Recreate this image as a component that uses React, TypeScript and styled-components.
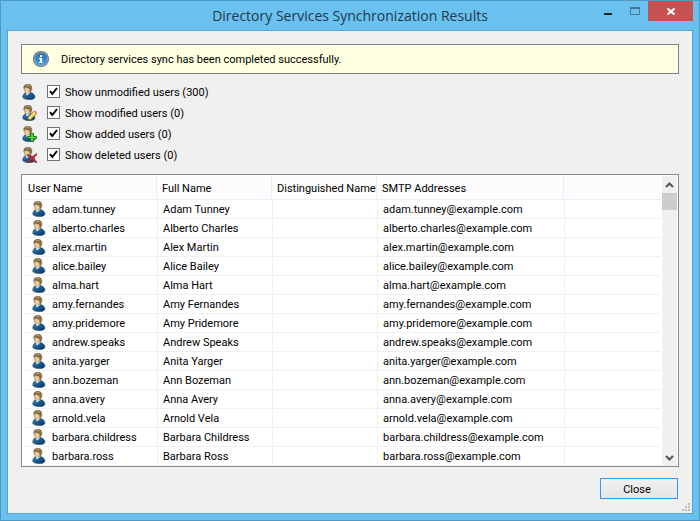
import React, { useState } from "react";
import styled, { createGlobalStyle } from "styled-components";

const GlobalStyle = createGlobalStyle`
  *, *::before, *::after { box-sizing: border-box; }
  body { margin: 0; background: #6ac1ef; }
  button, input { font: inherit; color: inherit; }
`;

const uiFont = `Roboto, "Open Sans", sans-serif`;

const Window = styled.div`
  display: flex;
  flex-direction: column;
  min-height: 100vh;
  padding: 0 6px 6px;
  border: 1px solid #4f9ac4;
  background: #6ac1ef;
  color: #000;
  font: 11px/14px ${uiFont};
`;

const TitleBar = styled.header`
  display: grid;
  grid-template-columns: 1fr auto 1fr;
  align-items: start;
  height: 29px;
`;

const Title = styled.h1`
  grid-column: 2;
  margin: 0;
  font: 400 14px/29px "Open Sans", sans-serif;
  color: #22384a;
  white-space: nowrap;
`;

const WindowButtons = styled.div`
  display: flex;
  justify-content: flex-end;
`;

const WindowButton = styled.button<{ $width: number; $danger?: boolean }>`
  display: flex;
  width: ${(p) => p.$width}px;
  height: 20px;
  padding: 0;
  border: 0;
  background: ${(p) => (p.$danger ? "#c75050" : "transparent")};
`;

const Client = styled.main`
  display: flex;
  flex: 1;
  flex-direction: column;
  padding: 13px 13px 14px;
  border: 1px solid #57a4cf;
  background: #f0f0f0;
`;

const Notice = styled.div`
  display: flex;
  align-items: center;
  gap: 12px;
  height: 30px;
  padding: 0 11px;
  border: 1px solid #828282;
  background: #ffffe1;
`;

const Label = styled.span`
  padding-top: 2px;
`;

const Options = styled.div`
  display: flex;
  flex-direction: column;
  padding: 7px 0 9px;
`;

const Option = styled.label`
  display: flex;
  align-items: center;
  height: 21px;
`;

const CheckWrap = styled.span`
  display: grid;
  margin: 0 5px 0 10px;
  svg { grid-area: 1 / 1; pointer-events: none; }
  input:not(:checked) + svg { visibility: hidden; }
`;

const CheckBox = styled.input`
  grid-area: 1 / 1;
  appearance: none;
  width: 13px;
  height: 13px;
  margin: 0;
  border: 1px solid #707070;
  background: #fff;
`;

const ListFrame = styled.div`
  display: flex;
  flex: 1;
  padding: 1px 1px 0;
  border: 1px solid #898989;
  background: #fff;
`;

const TableArea = styled.div`
  flex: 1;
  min-width: 0;
  overflow: hidden;
`;

const Table = styled.table`
  width: 100%;
  table-layout: fixed;
  border-collapse: separate;
  border-spacing: 0;
`;

const Column = styled.col<{ $width?: number }>`
  width: ${(p) => (p.$width ? `${p.$width}px` : "auto")};
`;

const HeadCell = styled.th`
  height: 24px;
  padding: 2px 0 0 5px;
  border-right: 1px solid #e5effa;
  border-bottom: 1px solid #e5effa;
  background: #fcfcfc;
  font-weight: 400;
  text-align: left;
  white-space: nowrap;
  &:last-child { border-right: 0; }
`;

const Cell = styled.td`
  height: 19px;
  padding: 2px 0 0 5px;
  border-left: 1px solid #f0f0f0;
  border-bottom: 1px solid #f0f0f0;
  white-space: nowrap;
  &:first-child { padding: 0 0 0 8px; border-left: 0; }
`;

const UserLabel = styled.span`
  display: flex;
  align-items: center;
  gap: 5px;
  height: 18px;
`;

const ScrollBar = styled.div`
  display: flex;
  flex-direction: column;
  width: 15px;
  margin-left: 1px;
  background: #f0f0f0;
`;

const ScrollButton = styled.button`
  display: flex;
  align-items: center;
  justify-content: center;
  height: 17px;
  padding: 0;
  border: 0;
  background: transparent;
`;

const ScrollTrack = styled.div`
  flex: 1;
`;

const ScrollThumb = styled.div`
  height: 17px;
  background: #cdcdcd;
`;

const Footer = styled.footer`
  display: flex;
  justify-content: flex-end;
  padding: 11px 1px 0 0;
`;

const CloseButton = styled.button`
  width: 78px;
  height: 21px;
  padding: 2px 4px 0 0;
  border: 1px solid #3399ff;
  background: linear-gradient(#f0f0f0, #e5e5e5);
`;

const Grip = styled.svg`
  position: absolute;
  right: 10px;
  bottom: 10px;
`;

const Shell = styled.div`
  position: relative;
`;

type Badge = "edit" | "add" | "remove";

function UserIcon({ badge }: { badge?: Badge }) {
  return (
    <svg width="16" height="16" viewBox="0 0 16 16" aria-hidden="true">
      <defs>
        <linearGradient id="coat" x1="0" y1="0" x2="1" y2="1">
          <stop offset="0" stopColor="#4388b2" />
          <stop offset="0.5" stopColor="#17568b" />
          <stop offset="1" stopColor="#0a3566" />
        </linearGradient>
        <linearGradient id="skin" x1="0" y1="0" x2="1" y2="0">
          <stop offset="0" stopColor="#c49c6c" />
          <stop offset="0.45" stopColor="#f5dcae" />
          <stop offset="1" stopColor="#b98b5c" />
        </linearGradient>
      </defs>
      <path d="M1.8 13.6C1.8 11.2 2.6 9.4 4.8 8.6L9.6 8.6C12.4 9.3 13.8 10.8 13.9 13.4C12.6 16.3 4 16.3 1.8 13.6Z" fill="url(#coat)" stroke="#173e61" strokeWidth="0.6" />
      <path d="M4.6 8.4L5.8 11.4L8.6 9.4L8.4 7.8Z" fill="#e7edf1" />
      <path d="M3.2 3.1C3.1 6.6 3.8 9.4 6.4 9.3C9 9.1 10 6.8 9.9 3.6Z" fill="url(#skin)" stroke="#9b7b55" strokeWidth="0.4" />
      <path d="M2.8 4.4C2.4 1.4 4.2 0.3 6.7 0.3C10 0.2 11.4 2.2 10.8 5.6L9.6 8L8.4 4.2C7 4.2 5.6 3.6 4.4 2.9Z" fill="#897044" stroke="#665332" strokeWidth="0.4" />
      <path d="M4.8 1.5Q7 .7 8.8 2" fill="none" stroke="#c7af7e" strokeWidth="0.7" />
      {badge === "edit" && (
        <g>
          <path d="M6.4 15.4L7.2 12.2L13 6.2L15.6 8.6L9.8 14.5Z" fill="#f8d65d" stroke="#896524" strokeWidth="0.8" />
          <path d="M13 6.2L14.2 5.4L16 7.3L15.4 8.6Z" fill="#e28176" />
          <path d="M8.1 12.8L13.8 7.1" stroke="#fff3a8" strokeWidth="0.9" />
          <path d="M6.4 15.6L7 13.6L8.4 14.9Z" fill="#382e23" />
        </g>
      )}
      {badge === "add" && (
        <path d="M9.5 7.5H12.5V10.5H15.5V12.5H12.5V15.5H9.5V12.5H6.5V10.5H9.5Z" fill="#62cb48" stroke="#187c19" strokeWidth="1" />
      )}
      {badge === "remove" && (
        <g fill="none" strokeLinecap="round">
          <path d="M7 8L15 15M15 7.5L7 15.2" stroke="#921b20" strokeWidth="2" />
          <path d="M7.2 8.2L14.8 14.8M14.8 7.7L7.2 15" stroke="#e33b3d" strokeWidth="1" />
        </g>
      )}
    </svg>
  );
}

function InfoIcon() {
  return (
    <svg width="16" height="16" viewBox="0 0 16 16" aria-hidden="true">
      <defs>
        <linearGradient id="info" x1="0" y1="0" x2="0" y2="1">
          <stop offset="0" stopColor="#356fa5" />
          <stop offset="1" stopColor="#40a2e5" />
        </linearGradient>
      </defs>
      <circle cx="8" cy="8" r="8" fill="#5d7486" />
      <circle cx="8" cy="8" r="7" fill="#9aafbd" />
      <circle cx="8" cy="8" r="6.2" fill="url(#info)" />
      <path d="M7 4H9V6H7ZM6 7H9V11H10V12H6V11H7V8H6Z" fill="#fff" />
    </svg>
  );
}

function Chevron({ down }: { down?: boolean }) {
  return (
    <svg width="9" height="6" viewBox="0 0 9 6" aria-hidden="true">
      <path d={down ? "M1 1L4.5 4.5L8 1" : "M1 5L4.5 1.5L8 5"} fill="none" stroke="#555" strokeWidth="2" />
    </svg>
  );
}

const options: { label: string; badge?: Badge }[] = [
  { label: "Show unmodified users (300)" },
  { label: "Show modified users (0)", badge: "edit" },
  { label: "Show added users (0)", badge: "add" },
  { label: "Show deleted users (0)", badge: "remove" },
];

const names = [
  "Adam Tunney",
  "Alberto Charles",
  "Alex Martin",
  "Alice Bailey",
  "Alma Hart",
  "Amy Fernandes",
  "Amy Pridemore",
  "Andrew Speaks",
  "Anita Yarger",
  "Ann Bozeman",
  "Anna Avery",
  "Arnold Vela",
  "Barbara Childress",
  "Barbara Ross",
];

const users = names.map((name) => ({
  name,
  login: name.toLowerCase().replace(" ", "."),
}));

function FilterOption({ label, badge }: { label: string; badge?: Badge }) {
  const [checked, setChecked] = useState(true);
  return (
    <Option>
      <UserIcon badge={badge} />
      <CheckWrap>
        <CheckBox type="checkbox" checked={checked} onChange={(e) => setChecked(e.target.checked)} />
        <svg width="13" height="13" viewBox="0 0 13 13" aria-hidden="true">
          <path d="M3 6.2L5.3 9L10 3" fill="none" stroke="#000" strokeWidth="2" />
        </svg>
      </CheckWrap>
      <Label>{label}</Label>
    </Option>
  );
}

export default function App() {
  return (
    <Shell>
      <GlobalStyle />
      <Window>
        <TitleBar>
          <Title>Directory Services Synchronization Results</Title>
          <WindowButtons>
            <WindowButton $width={27} aria-label="Minimize">
              <svg width="27" height="20" shapeRendering="crispEdges">
                <path d="M6 12H14V14H6Z" fill="#222" />
              </svg>
            </WindowButton>
            <WindowButton $width={23} aria-label="Maximize">
              <svg width="23" height="20" shapeRendering="crispEdges">
                <path d="M5 6H15V14H5ZM6 8V13H14V8Z" fill="#48788f" fillRule="evenodd" />
              </svg>
            </WindowButton>
            <WindowButton $width={45} $danger aria-label="Close window">
              <svg width="45" height="20">
                <path d="M19.5 7.5L26.5 13.5M26.5 7.5L19.5 13.5" stroke="#fff" strokeWidth="2" />
              </svg>
            </WindowButton>
          </WindowButtons>
        </TitleBar>
        <Client>
          <Notice role="status">
            <InfoIcon />
            <Label>Directory services sync has been completed successfully.</Label>
          </Notice>
          <Options>
            {options.map((o) => (
              <FilterOption key={o.label} {...o} />
            ))}
          </Options>
          <ListFrame>
            <TableArea>
              <Table>
                <colgroup>
                  <Column $width={134} />
                  <Column $width={115} />
                  <Column $width={105} />
                  <Column $width={187} />
                  <Column />
                </colgroup>
                <thead>
                  <tr>
                    <HeadCell>User Name</HeadCell>
                    <HeadCell>Full Name</HeadCell>
                    <HeadCell>Distinguished Name</HeadCell>
                    <HeadCell>SMTP Addresses</HeadCell>
                    <HeadCell />
                  </tr>
                </thead>
                <tbody>
                  {users.map((u) => (
                    <tr key={u.login}>
                      <Cell>
                        <UserLabel>
                          <UserIcon />
                          <Label>{u.login}</Label>
                        </UserLabel>
                      </Cell>
                      <Cell>{u.name}</Cell>
                      <Cell />
                      <Cell>{u.login}@example.com</Cell>
                      <Cell />
                    </tr>
                  ))}
                </tbody>
              </Table>
            </TableArea>
            <ScrollBar>
              <ScrollButton aria-label="Scroll up">
                <Chevron />
              </ScrollButton>
              <ScrollTrack>
                <ScrollThumb />
              </ScrollTrack>
              <ScrollButton aria-label="Scroll down">
                <Chevron down />
              </ScrollButton>
            </ScrollBar>
          </ListFrame>
          <Footer>
            <CloseButton>Close</CloseButton>
          </Footer>
        </Client>
      </Window>
      <Grip width="8" height="8" viewBox="0 0 8 8" fill="#bfbfbf" shapeRendering="crispEdges" aria-hidden="true">
        <path d="M6 0H8V2H6ZM3 3H5V5H3ZM6 3H8V5H6ZM0 6H2V8H0ZM3 6H5V8H3ZM6 6H8V8H6Z" />
      </Grip>
    </Shell>
  );
}
